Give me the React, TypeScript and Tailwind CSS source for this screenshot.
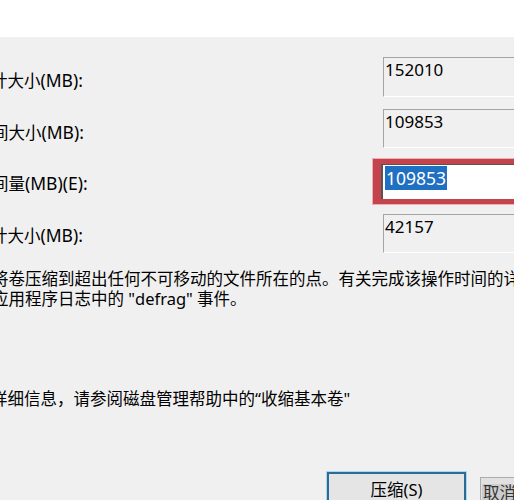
export default function App() {
  const boxCls =
    "h-full w-[200px] border-t border-l border-[#a5a5a5] border-b border-b-white bg-[#f0f0f0] pl-[1px] pt-[1px] text-[17px] leading-[22px] text-black";
  const mb = "text-[17.5px]";
  return (
    <div className="w-[514px] h-[500px] overflow-hidden bg-[#f0f0f0] font-['Noto_Sans','Noto_Sans_CJK_SC',sans-serif] text-[16.5px] text-black">
      <div className="h-[37px] bg-white" />
      <div className="pt-[20px]">
        {/* Row 1 */}
        <div className="grid grid-cols-[383px_200px] h-[40px]">
          <div className="flex items-center pt-[6px] overflow-hidden">
            <span className="-ml-[9px] whitespace-nowrap">
              计大小<span className={mb}>(MB):</span>
            </span>
          </div>
          <div className={boxCls}>152010</div>
        </div>
        {/* Row 2 */}
        <div className="grid grid-cols-[383px_200px] h-[39px] mt-[12px]">
          <div className="flex items-center pt-[7px] overflow-hidden">
            <span className="-ml-[8px] whitespace-nowrap">
              间大小<span className={mb}>(MB):</span>
            </span>
          </div>
          <div className={boxCls}>109853</div>
        </div>
        {/* Row 3 */}
        <div className="grid grid-cols-[373px_220px] h-[45px] mt-[11px]">
          <div className="flex items-center pt-[4px] overflow-hidden">
            <span className="-ml-[8px] whitespace-nowrap">
              间量<span className={mb}>(MB)(E):</span>
            </span>
          </div>
          <div className="h-full border-t-[5px] border-b-[5px] border-l-[8px] border-[#c4434d] shadow-[0_0_0_1px_#eab0b5]">
            <div className="h-full bg-white border-l-2 border-t border-[#555] pl-[2px] pt-[1px]">
              <span className="inline-block bg-[#1f6fc2] text-white text-[17.5px] leading-[24px] px-[1px]">
                109853
              </span>
            </div>
          </div>
        </div>
        {/* Row 4 */}
        <div className="grid grid-cols-[383px_200px] h-[39px] mt-[10px]">
          <div className="flex items-center pt-[3px] overflow-hidden">
            <span className="-ml-[9px] whitespace-nowrap">
              计大小<span className={mb}>(MB):</span>
            </span>
          </div>
          <div className={boxCls}>42157</div>
        </div>

        {/* Paragraph */}
        <div className="mt-[16px] leading-[20px] overflow-hidden">
          <div className="-ml-[8px] whitespace-nowrap">
            将卷压缩到超出任何不可移动的文件所在的点。有关完成该操作时间的详细
          </div>
          <div className="-ml-[8px] whitespace-nowrap">应用程序日志中的 "defrag" 事件。</div>
        </div>

        <div className="mt-[80px] leading-[20px] overflow-hidden">
          <div className="-ml-[9px] whitespace-nowrap">
            详细信息，请参阅磁盘管理帮助中的“收缩基本卷"
          </div>
        </div>

        {/* Buttons */}
        <div className="mt-[63px] flex items-start">
          <div className="ml-[327px] w-[139px] h-[36px] border-2 border-[#2e6b94] shadow-[0_0_0_1px_#a6d9ee] bg-[#e5e5e5] flex items-center justify-center shrink-0">
            <span>压缩(S)</span>
          </div>
          <div className="ml-[14px] mt-[5px] w-[110px] h-[34px] border border-[#adadad] bg-[#e1e1e1] shrink-0 pl-[1px] pt-[3px]">
            <span className="inline-block bg-[#cdcdcd] text-[#333] leading-[18px] px-[1px]">取消(C)</span>
          </div>
        </div>
      </div>
    </div>
  );
}
